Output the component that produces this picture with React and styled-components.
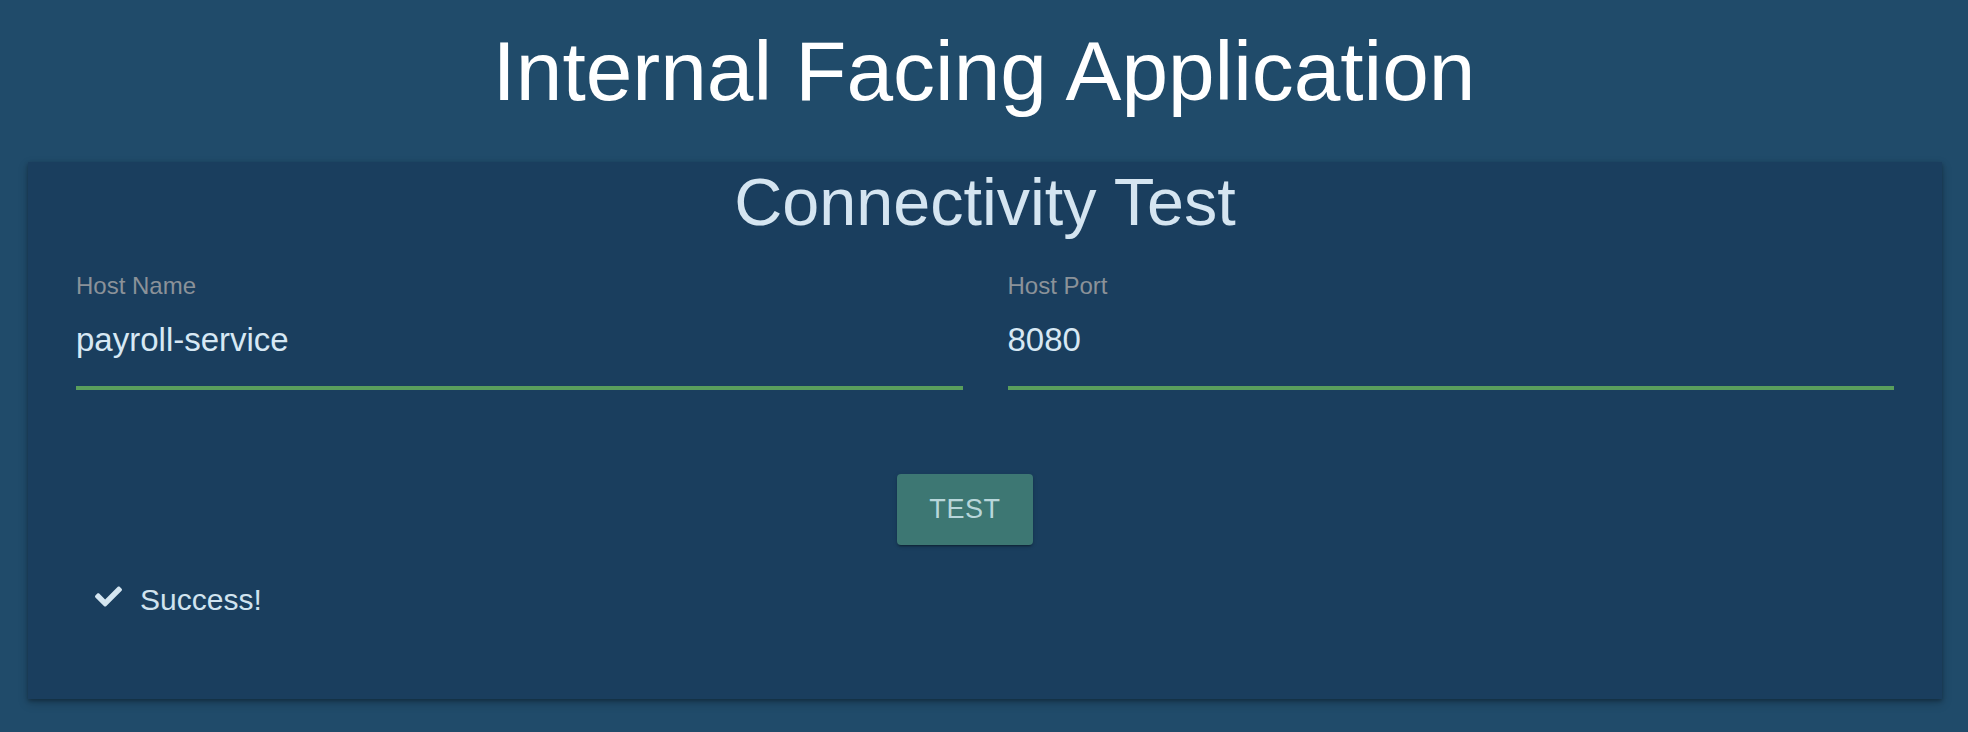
import React, { useState } from "react";
import styled, { createGlobalStyle } from "styled-components";
import { FaCheck } from "react-icons/fa";

const GlobalStyle = createGlobalStyle`
    html, body {
        margin: 0;
        padding: 0;
        background-color: #204b6a;
    }
    body {
        font-family: "Liberation Sans", Arial, sans-serif;
        min-height: 732px;
    }
`;

const Page = styled.div`
    display: flex;
    flex-direction: column;
    padding-top: 29px;
`;

const AppTitle = styled.h1`
    margin: 0;
    font-size: 83.8px;
    line-height: 84px;
    font-weight: 400;
    color: #ffffff;
    text-align: center;
`;

const Card = styled.section`
    margin: 49px 26px 0 28px;
    padding: 7px 48px 81px;
    background-color: #1a3e5e;
    box-shadow: 0 2px 4px rgba(0, 0, 0, 0.3), 0 4px 10px rgba(0, 0, 0, 0.18);
    display: flex;
    flex-direction: column;
`;

const CardTitle = styled.h2`
    margin: 0;
    font-size: 66.5px;
    line-height: 66.5px;
    font-weight: 400;
    color: #d5e5f1;
    text-align: center;
`;

const FieldRow = styled.div`
    display: grid;
    grid-template-columns: 1fr 1fr;
    column-gap: 45px;
    margin-top: 36px;
`;

const Field = styled.label`
    display: flex;
    flex-direction: column;
`;

const FieldLabel = styled.span`
    font-size: 24px;
    line-height: 27.6px;
    color: #8b9299;
`;

const FieldInput = styled.input`
    margin-top: 21px;
    height: 40px;
    padding: 0 0 26px;
    border: none;
    border-bottom: 4px solid #5a9e5c;
    background: transparent;
    font-family: inherit;
    font-size: 33px;
    color: #d7e8f4;
    outline: none;
    box-sizing: content-box;
`;

// 버튼은 카드 중앙보다 살짝 왼쪽에 위치
const ButtonRow = styled.div`
    display: flex;
    justify-content: center;
    padding-right: 40px;
    margin-top: 84px;
`;

const TestButton = styled.button`
    width: 136px;
    height: 71px;
    padding: 0;
    border: none;
    border-radius: 4px;
    background-color: #3d7773;
    color: #b8d6da;
    font-family: inherit;
    font-size: 27px;
    letter-spacing: 0.6px;
    text-transform: uppercase;
    cursor: pointer;
    box-shadow: 0 3px 1px -2px rgba(0, 0, 0, 0.2), 0 2px 2px 0 rgba(0, 0, 0, 0.14), 0 1px 5px 0 rgba(0, 0, 0, 0.12);
`;

const Result = styled.div`
    display: flex;
    align-items: center;
    gap: 18px;
    margin-top: 37px;
    padding-left: 19px;
    height: 36px;
    font-size: 30px;
    line-height: 36px;
    color: #d0e3ef;

    svg {
        color: #d5e6f1;
        margin-bottom: 8px;
        flex-shrink: 0;
    }
`;

const App = () => {
    const [hostName, setHostName] = useState("payroll-service");
    const [hostPort, setHostPort] = useState("8080");

    return (
        <>
            <GlobalStyle />
            <Page>
                <AppTitle>Internal Facing Application</AppTitle>
                <Card>
                    <CardTitle>Connectivity Test</CardTitle>
                    <FieldRow>
                        <Field>
                            <FieldLabel>Host Name</FieldLabel>
                            <FieldInput value={hostName} onChange={(e) => setHostName(e.target.value)} />
                        </Field>
                        <Field>
                            <FieldLabel>Host Port</FieldLabel>
                            <FieldInput value={hostPort} onChange={(e) => setHostPort(e.target.value)} />
                        </Field>
                    </FieldRow>
                    <ButtonRow>
                        <TestButton>Test</TestButton>
                    </ButtonRow>
                    <Result>
                        <FaCheck size={27} />
                        <span>Success!</span>
                    </Result>
                </Card>
            </Page>
        </>
    );
};

export default App;
